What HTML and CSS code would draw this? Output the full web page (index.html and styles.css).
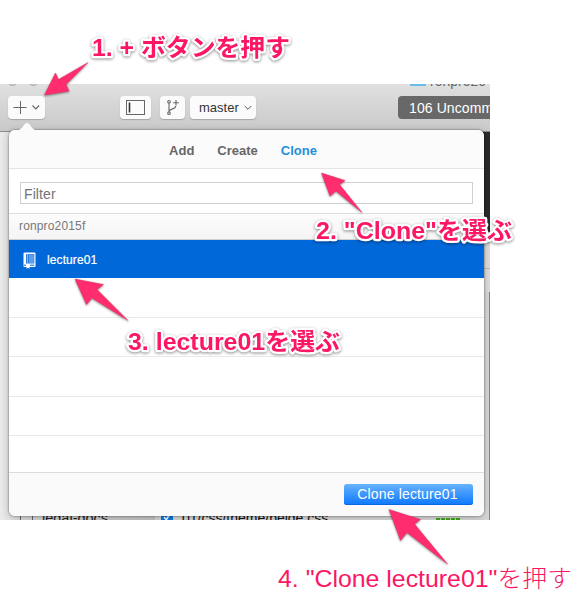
FILE: index.html
```html
<!DOCTYPE html>
<html lang="ja">
<head>
<meta charset="utf-8">
<title>Clone lecture01</title>
<link rel="stylesheet" href="styles.css">
</head>
<body>
<main class="stage">
  <section class="window">
    <header class="toolbar">
      <div class="titlebar">
        <i class="light"></i><i class="light"></i>
        <i class="folder"></i><span class="title">ronpro20</span>
      </div>
      <div class="tools">
        <div class="tool add">
          <svg width="37" height="23" viewBox="0 0 37 23" fill="none" stroke="#666"><path d="M5.500 11.500h13M12.500 5v13"/><path d="M24.500 9.500l3.300 3.300 3.300-3.300" stroke-width="1.200"/></svg>
        </div>
        <div class="tool side">
          <svg width="31" height="23" viewBox="0 0 31 23" fill="none" stroke="#666"><rect x="6.500" y="4.500" width="18" height="14"/><path d="M9.500 6.500v10" stroke="#333" stroke-width="1.600"/></svg>
        </div>
        <div class="tool fork">
          <svg width="25" height="23" viewBox="0 0 25 23" fill="none" stroke="#666" stroke-width="1.100"><circle cx="9" cy="5.800" r="1.300"/><circle cx="9" cy="17.200" r="1.300"/><path d="M9 7.200v8.600M9.300 15c.5-2.500 6-1.200 6.500-5M16 4v5.500M13.200 6.700h5.600"/></svg>
        </div>
        <div class="tool branch">master
          <svg width="8" height="6" viewBox="0 0 8 6" fill="none" stroke="#555"><path d="M.7 1l3.300 3.300L7.300 1"/></svg>
        </div>
        <div class="changes">106 Uncommitted Changes</div>
      </div>
    </header>
    <div class="workspace">
      <div class="sidebar"><i class="repo"></i><span>legal-docs</span></div>
      <div class="files"><i class="check"><svg width="12" height="12" viewBox="0 0 12 12" fill="none" stroke="#fff" stroke-width="1.600"><path d="M3 6l2.300 2.700L9.500 2"/></svg></i><span>01/css/theme/beige.css</span><i class="diffstat"></i></div>
      <div class="detail"><i class="dark"></i><i class="pale"></i><i class="edge"></i></div>
    </div>
    <div class="popover">
      <svg class="notch" width="20" height="9" viewBox="0 0 20 9"><path d="M0 9C5 8 7 1 10 1s5 7 10 8z" fill="#fbfbfb"/></svg>
      <nav class="tabs"><span>Add</span><span>Create</span><span class="current">Clone</span></nav>
      <div class="search"><div class="filter">Filter</div></div>
      <div class="owner">ronpro2015f</div>
      <div class="row selected">
        <svg width="14" height="17" viewBox="0 0 14 17"><path d="M1.500.5h11q1 0 1 1v12.500q0 1-1 1h-5v1.800l-1.500-1-1.500 1V15h-2q-1 0-1-1V1.500q0-1 1-1z" fill="#fff"/><path d="M4 2h8.300v9.500H4z" fill="#2b7ade"/><path d="M5.500 2.500v8.500" stroke="#fff" stroke-dasharray="1 1"/><path d="M7 2.500h4.800v8.500H7z" fill="#5f9fea"/><path d="M2 13.200h2M8 13.200h4.300" stroke="#0068d9"/></svg>
        <span>lecture01</span>
      </div>
      <div class="row"></div><div class="row"></div><div class="row"></div><div class="row"></div><div class="row last"></div>
      <footer class="actions"><div class="button">Clone lecture01</div></footer>
    </div>
  </section>
  <svg class="notes" width="584" height="600" viewBox="0 0 584 600">
    <g class="arrows">
      <path d="M44.500 95L55.500 73l3 6.500L88 62.500 66 84.500l3 6.500z"/>
      <path d="M321.500 173l23.500 7.500-5.500 4L362 212.500l-26-21.500-6 5z"/>
      <path d="M75 279l28.500 5.500-6.500 5L128 320.500 92 298l-5.500 6.500z"/>
      <path d="M389 509.500l31.500 10-6 4.500 33 40L407 532.500l-6.500 8z"/>
    </g>
    <g class="captions">
      <text x="92" y="56" textLength="198" lengthAdjust="spacingAndGlyphs">1. + ボタンを押す</text>
      <text x="316" y="239" textLength="196" lengthAdjust="spacingAndGlyphs">2. "Clone"を選ぶ</text>
      <text x="128" y="349.500" textLength="212" lengthAdjust="spacingAndGlyphs">3. lecture01を選ぶ</text>
    </g>
    <text class="plain" x="278" y="586.500" textLength="294" lengthAdjust="spacingAndGlyphs">4. "Clone lecture01"を押す</text>
  </svg>
</main>
</body>
</html>
```

FILE: styles.css
```css
* { box-sizing: border-box; }
body { margin: 0; background: #fff; font-family: "Liberation Sans", "Noto Sans CJK JP", sans-serif; }
.stage { position: relative; width: 584px; height: 600px; padding-top: 84px; overflow: hidden; }
.window { position: relative; width: 490px; height: 436px; overflow: hidden; display: flex; flex-direction: column; background: #e9e9e9; }

.toolbar { height: 48px; flex: none; background: linear-gradient(#e0e0e0, #c9c9c9); border-bottom: 1px solid #8e8e8e; }
.titlebar { height: 12px; display: flex; align-items: flex-start; padding-left: 7px; overflow: hidden; }
.light { width: 11px; height: 11px; flex: none; margin-top: -9px; margin-right: 10px; border: 1px solid #aaa; border-radius: 50%; background: #ccc; }
.folder { width: 16px; height: 12px; margin: -10px 4px 0 361px; background: #69bdea; flex: none; }
.title { font-size: 14px; line-height: 16px; margin-top: -11px; color: #666; }
.tools { display: flex; padding-left: 8px; }
.tool { height: 23px; background: #fbfbfb; border-radius: 4px; box-shadow: 0 1px 1px rgba(0, 0, 0, .2); flex: none; }
.tool svg { display: block; }
.add { width: 37px; margin-right: 75px; }
.side { width: 31px; margin-right: 9px; }
.fork { width: 25px; margin-right: 5px; }
.branch { width: 66px; display: flex; align-items: center; gap: 5px; padding-left: 9px; font-size: 13px; color: #333; }
.changes { width: 200px; flex: none; margin-left: 142px; height: 23px; line-height: 24px; padding-left: 11px; border-radius: 4px; background: #686868; color: #fff; font-size: 14px; white-space: nowrap; letter-spacing: .1px; }

.workspace { flex: 1; display: flex; align-items: stretch; }
.sidebar { width: 155px; display: flex; align-items: flex-end; padding-left: 20px; font-size: 14.500px; line-height: 16px; color: #222; background: linear-gradient(90deg, #ebebeb 0, #d8d8d8 30px, #c5c5c5); }
.sidebar span { margin: 0 0 -6px 9px; }
.repo { width: 13px; height: 12px; border: 1px solid #666; border-top: 0; margin-bottom: -1px; }
.files { width: 318px; display: flex; align-items: flex-end; padding-left: 6px; font-size: 14px; line-height: 16px; color: #111; background: #d9d9d9; }
.files span { margin: 0 0 -6px 9px; white-space: nowrap; }
.check { width: 12px; height: 12px; background: #0a7be8; margin-bottom: -3px; }
.check svg { display: block; }
.diffstat { width: 25px; height: 2px; margin-left: 108px; background: repeating-linear-gradient(90deg, #43a51b 0 4px, #c9dfc1 4px 5px); }
.detail { flex: 1; display: flex; flex-direction: column; background: #d8d8d8; }
.dark { height: 100px; background: #292b2b; }
.pale { height: 60px; background: linear-gradient(#ddd 36px, #bbb 36px 37px, #ddd 37px); }
.edge { flex: 1; border-right: 1px solid #568be0; }

.popover { position: absolute; left: 9px; top: 46px; width: 475px; height: 386px; border-radius: 6px; background: #fff; display: flex; flex-direction: column; box-shadow: 0 0 2px rgba(0, 0, 0, .6), 0 2px 8px rgba(0, 0, 0, .22); }
.notch { position: absolute; left: 8px; top: -8px; }
.tabs { height: 39px; flex: none; display: flex; justify-content: center; gap: 23px; border-radius: 6px 6px 0 0; background: #fbfbfb; border-bottom: 1px solid #e4e4e4; font-size: 13px; font-weight: bold; line-height: 42px; color: #666; padding-right: 7px; }
.current { color: #1f8fdc; }
.search { height: 44px; flex: none; padding: 13px 11px 0; }
.filter { height: 22px; border: 1px solid #cfcfcf; padding-left: 3px; font-size: 14px; line-height: 23px; color: #737373; letter-spacing: .1px; }
.owner { height: 27px; flex: none; border-top: 1px solid #ddd; border-bottom: 1px solid #cbcfd3; background: linear-gradient(#fcfcfc, #f5f5f5); padding-left: 10px; font-size: 12px; line-height: 25px; color: #777; letter-spacing: .15px; }
.row { height: 40px; flex: none; border-bottom: 1px solid #e9e9e9; }
.selected { height: 38px; border: 0; background: #0068d9; color: #fff; display: flex; align-items: center; gap: 11px; padding: 2px 0 0 13px; font-size: 12px; letter-spacing: .1px; -webkit-text-stroke: .2px #fff; }
.row:nth-of-type(5), .row:nth-of-type(7) { height: 39px; }
.row.last { height: auto; flex: 1; border-color: #ddd; }
.actions { height: 43px; flex: none; padding: 11px 11px 0 0; display: flex; justify-content: flex-end; border-radius: 0 0 6px 6px; background: #fafafa; }
.button { width: 129px; height: 21px; border-radius: 3px; background: linear-gradient(#67b2fb, #0d78ff); box-shadow: inset 0 -1px #0967e0; color: #fff; text-align: center; font-size: 14px; line-height: 21px; letter-spacing: .15px; padding-right: 2px; }

.notes { position: absolute; left: 0; top: 0; }
.arrows { fill: #ff2d6e; stroke: #e62863; stroke-width: .5; filter: drop-shadow(0 1px 1px rgba(0, 0, 0, .45)); }
.captions { font-size: 24px; font-weight: bold; fill: #fb1763; stroke: #fff; stroke-width: 4.500px; stroke-linejoin: round; paint-order: stroke; filter: drop-shadow(0 1px 1.500px rgba(0, 0, 0, .45)); }
.plain { font-size: 24px; font-weight: 300; fill: #fb1763; }
```
